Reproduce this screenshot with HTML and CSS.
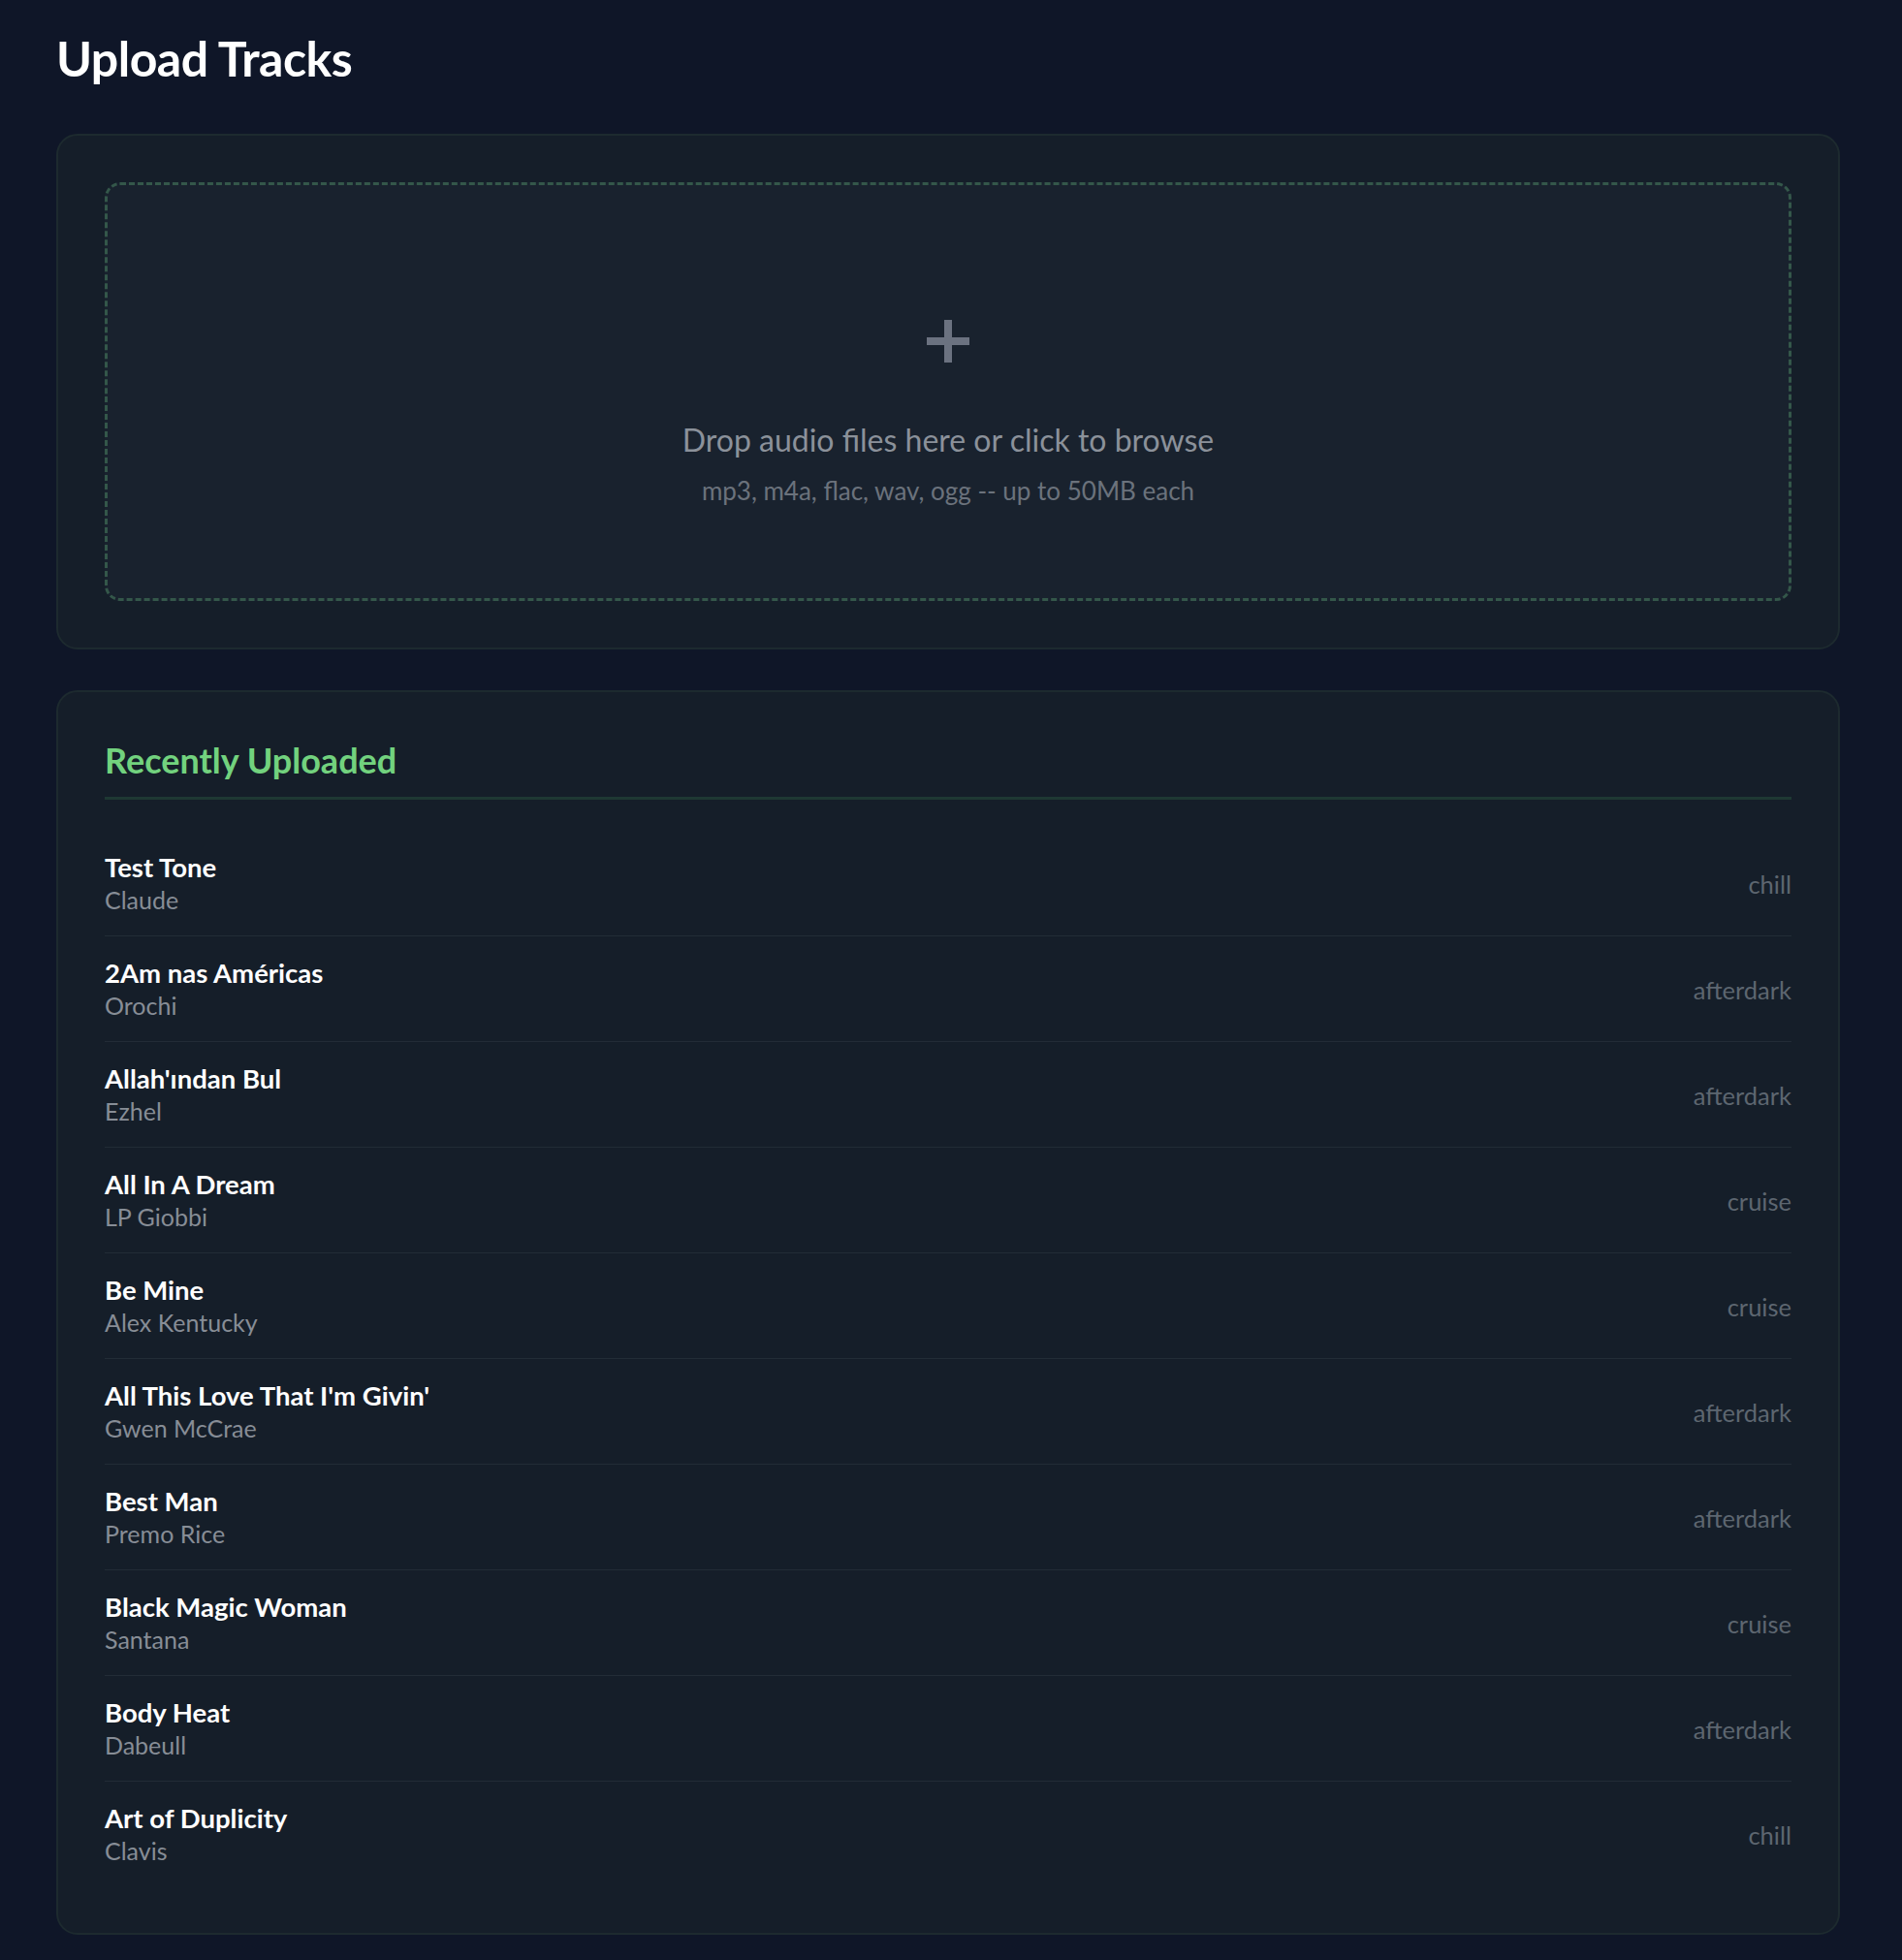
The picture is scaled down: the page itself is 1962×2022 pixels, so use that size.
FILE: index.html
```html
<!DOCTYPE html>
<html lang="en">
<head>
<meta charset="utf-8">
<title>Upload Tracks</title>
<link rel="stylesheet" href="styles.css">
</head>
<body>
<main class="page">
  <h1 class="page-title">Upload Tracks</h1>

  <section class="card upload-card">
    <div class="dropzone">
      <svg class="plus" width="44" height="44" viewBox="0 0 44 44" aria-hidden="true">
        <rect x="18" y="0" width="8" height="44" fill="#6b7280"/>
        <rect x="0" y="18" width="44" height="8" fill="#6b7280"/>
      </svg>
      <p class="drop-main">Drop audio files here or click to browse</p>
      <p class="drop-sub">mp3, m4a, flac, wav, ogg -- up to 50MB each</p>
    </div>
  </section>

  <section class="card recent-card">
    <h2 class="recent-title">Recently Uploaded</h2>
    <ul class="track-list">
      <li class="track"><div class="track-info"><span class="track-name">Test Tone</span><span class="track-artist">Claude</span></div><span class="track-tag">chill</span></li>
      <li class="track"><div class="track-info"><span class="track-name">2Am nas Américas</span><span class="track-artist">Orochi</span></div><span class="track-tag">afterdark</span></li>
      <li class="track"><div class="track-info"><span class="track-name">Allah'ından Bul</span><span class="track-artist">Ezhel</span></div><span class="track-tag">afterdark</span></li>
      <li class="track"><div class="track-info"><span class="track-name">All In A Dream</span><span class="track-artist">LP Giobbi</span></div><span class="track-tag">cruise</span></li>
      <li class="track"><div class="track-info"><span class="track-name">Be Mine</span><span class="track-artist">Alex Kentucky</span></div><span class="track-tag">cruise</span></li>
      <li class="track"><div class="track-info"><span class="track-name">All This Love That I'm Givin'</span><span class="track-artist">Gwen McCrae</span></div><span class="track-tag">afterdark</span></li>
      <li class="track"><div class="track-info"><span class="track-name">Best Man</span><span class="track-artist">Premo Rice</span></div><span class="track-tag">afterdark</span></li>
      <li class="track"><div class="track-info"><span class="track-name">Black Magic Woman</span><span class="track-artist">Santana</span></div><span class="track-tag">cruise</span></li>
      <li class="track"><div class="track-info"><span class="track-name">Body Heat</span><span class="track-artist">Dabeull</span></div><span class="track-tag">afterdark</span></li>
      <li class="track"><div class="track-info"><span class="track-name">Art of Duplicity</span><span class="track-artist">Clavis</span></div><span class="track-tag">chill</span></li>
    </ul>
  </section>
</main>
</body>
</html>
```

FILE: styles.css
```css
* { box-sizing: border-box; }

html, body {
  margin: 0;
  padding: 0;
  background: #0f1628;
}

body {
  font-family: "Lato", "Noto Sans", sans-serif;
  color: #ffffff;
}

.page {
  padding: 29px 64px 27px 58px;
  display: flex;
  flex-direction: column;
}

.page-title {
  margin: 0 0 47px;
  font-size: 50px;
  line-height: 62px;
  font-weight: 700;
  color: #ffffff;
  letter-spacing: -0.5px;
}

.card {
  background: #151e29;
  border: 2px solid #1d2a2f;
  border-radius: 22px;
  padding: 48px;
}

.upload-card {
  margin-bottom: 42px;
}

.dropzone {
  height: 432px;
  border: 3px dashed #34574a;
  border-radius: 16px;
  background: #19222e;
  padding-top: 139px;
  display: flex;
  flex-direction: column;
  align-items: center;
}

.plus {
  display: block;
}

.drop-main {
  margin: 60px 0 0;
  font-size: 32px;
  line-height: 40px;
  color: #8b919a;
}

.drop-sub {
  margin: 16px 0 0;
  font-size: 26px;
  line-height: 32px;
  color: #6b727c;
}

.recent-title {
  margin: 0;
  padding: 0 0 16px;
  font-size: 36px;
  line-height: 44px;
  font-weight: 700;
  color: #72d27e;
  border-bottom: 3px solid #1e3833;
}

.track-list {
  list-style: none;
  margin: 32px 0 0;
  padding: 0;
}

.track {
  display: flex;
  align-items: center;
  justify-content: space-between;
  padding: 21px 0 20px;
  border-bottom: 1px solid #222c36;
}

.track:last-child {
  border-bottom: none;
}

.track-info {
  display: flex;
  flex-direction: column;
}

.track-name {
  font-size: 27.5px;
  line-height: 33px;
  font-weight: 700;
  color: #ffffff;
}

.track-artist {
  font-size: 25px;
  line-height: 34px;
  color: #878d96;
}

.track-tag {
  font-size: 25.5px;
  color: #5d6670;
}
```
